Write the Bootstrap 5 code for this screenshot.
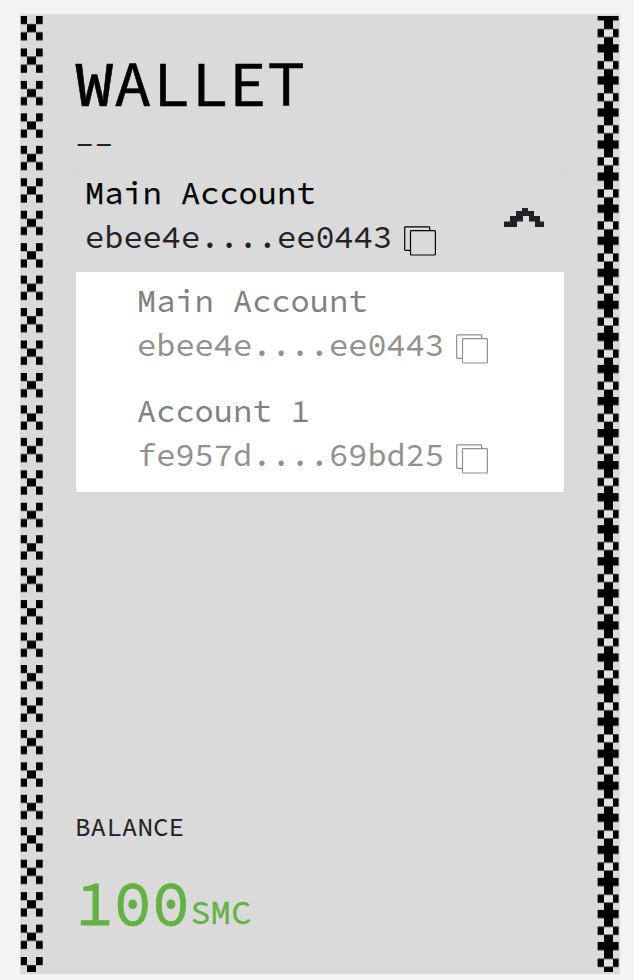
<!DOCTYPE html>
<html lang="en">
<head>
<meta charset="utf-8">
<meta name="viewport" content="width=device-width, initial-scale=1">
<title>Wallet</title>
<link href="https://cdn.jsdelivr.net/npm/bootstrap@5.3.0/dist/css/bootstrap.min.css" rel="stylesheet">
<style>
body{background:#f3f3f3;font-family:"Source Code Pro","Liberation Mono",monospace;color:#222226;-webkit-text-stroke:.12px currentColor}
svg{display:block;flex:none}
.wallet{width:600px;height:960px;margin:14px 0 0 20px;background:#dadada}
.wallet-body{width:489px;margin:0 33px 0 32px;padding-top:34px}
.title-text{font-size:64px;line-height:70px;height:70px;color:#000;font-weight:400;-webkit-text-stroke:.6px #000}
.dash-text{font-size:32px;line-height:54px;height:46px}
.picker{width:488px;margin-left:1px;box-shadow:0 4px 8px 0 rgba(0,0,0,.022)}
.picker-head{height:108px;padding:7px 20px 0 9px}
.entry{height:110px;padding:7px 0 0 61px;color:#909090}
.entry .acct-name{color:#808080}
.acct-name,.acct-addr{font-size:32px;line-height:44px;height:44px;white-space:pre}
.acct-name.main-name{color:#000;-webkit-text-stroke:.25px #000}
.copy-icon{margin:11px 0 0 12px}
.chevron{margin-top:37px}
.balance-label{font-size:26px;line-height:36px;margin-bottom:17px}
.amount{font-size:64px;line-height:80px;height:80px;color:#64b145;-webkit-text-stroke:.8px currentColor}
.unit{font-size:34px;line-height:1;vertical-align:1px;-webkit-text-stroke:.3px currentColor}
.balance{margin-bottom:32px}
</style>
</head>
<body>
<svg width="0" height="0" class="position-absolute">
<defs>
<pattern id="cross" x="0" y="2" width="23" height="32.45" patternUnits="userSpaceOnUse">
<path d="M.8 0H7v8.1H.8zM16 0h6.7v8.1H16zM7 8.1h9v8.1H7zM.8 16.2H7v8.1H.8zM16 16.2h6.7v8.1H16z"/>
</pattern>
<pattern id="plus" x="0" y="-1.8" width="23" height="32.06" patternUnits="userSpaceOnUse">
<path fill="#e2e2e2" d="M7 17h9v8H7z"/>
<path d="M.6 0h21v8.2H.6zM7 8h9v9H7zM.6 16.8H7v8.1H.6zM16 16.8h5.6v8.1H16zM7 24.8h9v7.3H7z"/>
</pattern>
<symbol id="copy" viewBox="0 0 32 30">
<path fill="none" stroke="currentColor" stroke-width="1.2" d="M6.5 24.3H1.4Q.7 24.3.7 23.6V1.5Q.7.8 1.4.8H25Q25.7.8 25.7 1.5V4.7"/>
<rect x="6.5" y="4.7" width="24.9" height="24.3" rx=".8" fill="none" stroke="currentColor" stroke-width="1.2"/>
</symbol>
</defs>
</svg>
<main class="wallet d-flex">
<svg width="23" height="958" aria-hidden="true"><rect width="23" height="958" fill="url(#cross)"/></svg>
<div class="wallet-body d-flex flex-column">
<h1 class="title-text m-0">WALLET</h1>
<div class="dash-text">--</div>
<section class="picker">
<div class="picker-head d-flex justify-content-between">
<div>
<div class="acct-name main-name">Main Account</div>
<div class="d-flex"><span class="acct-addr">ebee4e....ee0443</span><svg class="copy-icon" width="32" height="30" color="#000"><use href="#copy"/></svg></div>
</div>
<svg class="chevron" width="40" height="19" viewBox="0 0 40 19" fill="#222226"><path d="M0 19v-5.500h6V8h6V3h6V0h6v3h6v5h6v5.500h4V19h-9v-5.500h-6V8h-6v5.500h-6V19z"/></svg>
</div>
<div class="bg-white">
<div class="entry">
<div class="acct-name">Main Account</div>
<div class="d-flex"><span class="acct-addr">ebee4e....ee0443</span><svg class="copy-icon" width="32" height="30"><use href="#copy"/></svg></div>
</div>
<div class="entry">
<div class="acct-name">Account 1</div>
<div class="d-flex"><span class="acct-addr">fe957d....69bd25</span><svg class="copy-icon" width="32" height="30"><use href="#copy"/></svg></div>
</div>
</div>
</section>
<section class="balance mt-auto">
<div class="balance-label">BALANCE</div>
<div class="amount">100<span class="unit">SMC</span></div>
</section>
</div>
<svg width="23" height="958" aria-hidden="true"><rect y="2" width="23" height="956" fill="url(#plus)"/></svg>
</main>
</body>
</html>
